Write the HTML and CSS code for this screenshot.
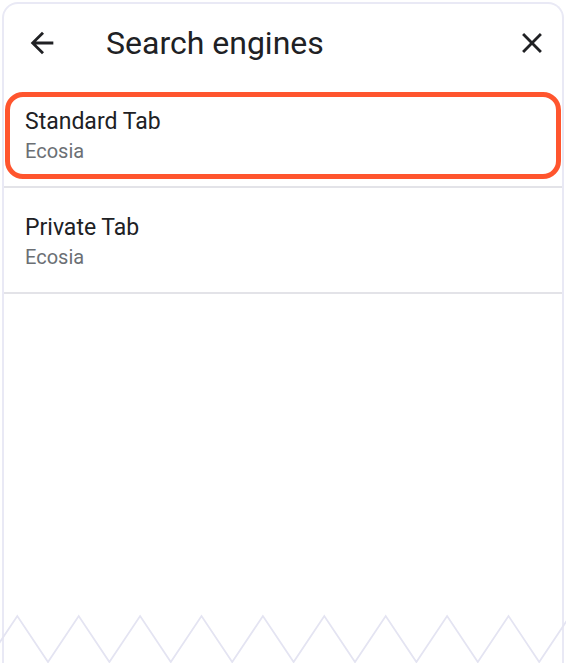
FILE: index.html
```html
<!DOCTYPE html>
<html lang="en">
<head>
<meta charset="utf-8">
<title>Search engines</title>
<link rel="stylesheet" href="styles.css">
</head>
<body>
<div class="frame">
  <header class="header">
    <svg class="icon" viewBox="0 0 24 24" aria-hidden="true"><path d="M20 11H7.83l5.59-5.59L12 4l-8 8 8 8 1.41-1.41L7.83 13H20v-2z"/></svg>
    <h1 class="title">Search engines</h1>
    <svg class="icon close" viewBox="0 0 24 24" aria-hidden="true"><path d="M19 6.41 17.59 5 12 10.59 6.41 5 5 6.41 10.59 12 5 17.59 6.41 19 12 13.41 17.59 19 19 17.59 13.41 12z"/></svg>
  </header>
  <div class="row row-highlight">
    <div class="highlight">
      <div class="item-title">Standard Tab</div>
      <div class="item-sub">Ecosia</div>
    </div>
  </div>
  <div class="divider"></div>
  <div class="row row-plain">
    <div class="item-title">Private Tab</div>
    <div class="item-sub">Ecosia</div>
  </div>
  <div class="divider"></div>
  <div class="spacer"></div>
  <svg class="zigzag" viewBox="0 0 558 48" preserveAspectRatio="none" aria-hidden="true">
    <polyline points="-17.4,47 13.3,1 44,47 74.7,1 105.4,47 136.1,1 166.8,47 197.5,1 228.2,47 258.9,1 289.6,47 320.3,1 351,47 381.7,1 412.4,47 443.1,1 473.8,47 504.5,1 535.2,47 565.9,1"/>
  </svg>
</div>
</body>
</html>
```
FILE: styles.css
```css
html, body {
  margin: 0;
  padding: 0;
  background: #ffffff;
}
body {
  width: 566px;
  height: 663px;
  overflow: hidden;
  font-family: Roboto, "Noto Sans", "Liberation Sans", sans-serif;
  color: #202124;
}
.frame {
  box-sizing: border-box;
  margin: 2px 2px 0 2px;
  height: 661px;
  border: 2px solid #e9e9f5;
  border-bottom: none;
  border-radius: 16px 16px 0 0;
  display: flex;
  flex-direction: column;
  background: #ffffff;
}
.header {
  height: 78px;
  display: flex;
  align-items: center;
  padding: 0 13px 0 21px;
  flex-shrink: 0;
}
.icon {
  width: 34px;
  height: 34px;
  fill: #202124;
  flex-shrink: 0;
}
.title {
  margin: 0 0 0 47px;
  font-size: 32px;
  font-weight: 400;
  flex: 1;
  line-height: 38px;
  color: #202124;
}
.row {
  height: 104px;
  box-sizing: border-box;
  flex-shrink: 0;
}
.row-highlight {
  padding: 10px 1px 7px 1px;
}
.highlight {
  box-sizing: border-box;
  height: 87px;
  border: 5px solid #ff552e;
  border-radius: 18px;
  padding: 11px 0 0 15px;
}
.row-plain {
  padding: 26px 0 0 21px;
}
.item-title {
  font-size: 23px;
  line-height: 27px;
  color: #202124;
}
.item-sub {
  margin-top: 5px;
  font-size: 20px;
  line-height: 23px;
  color: #6b6f74;
}
.divider {
  height: 2px;
  background: #e3e3e8;
  flex-shrink: 0;
}
.spacer {
  flex: 1;
}
.zigzag {
  display: block;
  width: 558px;
  height: 48px;
  flex-shrink: 0;
  overflow: visible;
}
.zigzag polyline {
  fill: none;
  stroke: #e4e4f2;
  stroke-width: 1.8;
}
```
